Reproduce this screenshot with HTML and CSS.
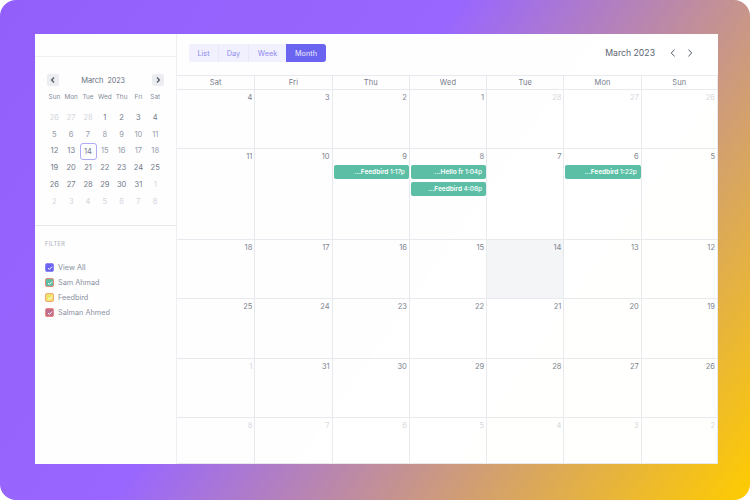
FILE: index.html
```html
<!DOCTYPE html>
<html lang="en">
<head>
<meta charset="utf-8">
<title>Calendar</title>
<link rel="stylesheet" href="styles.css">
</head>
<body>
<div class="stage">
  <main class="panel">
    <aside class="side">
      <div class="side-top"></div>
      <section class="mini">
        <div class="mini-head">
          <button class="mini-nav"><svg width="8" height="8" viewBox="0 0 8 8"><path d="M5 1.5 2.6 4 5 6.5" fill="none" stroke="#4b5563" stroke-width="1.2"/></svg></button>
          <div class="mini-title"><span>March</span><span>2023</span></div>
          <button class="mini-nav"><svg width="8" height="8" viewBox="0 0 8 8"><path d="M3 1.5 5.4 4 3 6.5" fill="none" stroke="#4b5563" stroke-width="1.2"/></svg></button>
        </div>
        <div class="mini-week"><span>Sun</span><span>Mon</span><span>Tue</span><span>Wed</span><span>Thu</span><span>Fri</span><span>Sat</span></div>
        <div class="mini-days">
          <span class="off">26</span><span class="off">27</span><span class="off">28</span><span class="dark">1</span><span class="dark">2</span><span class="dark">3</span><span class="dark">4</span>
          <span>5</span><span>6</span><span>7</span><span>8</span><span>9</span><span>10</span><span>11</span>
          <span class="dark">12</span><span class="dark">13</span><span class="today">14</span><span>15</span><span>16</span><span>17</span><span>18</span>
          <span class="dark">19</span><span class="dark">20</span><span class="dark">21</span><span class="dark">22</span><span class="dark">23</span><span class="dark">24</span><span class="dark">25</span>
          <span class="dark">26</span><span class="dark">27</span><span class="dark">28</span><span class="dark">29</span><span class="dark">30</span><span class="dark">31</span><span class="off">1</span>
          <span class="off">2</span><span class="off">3</span><span class="off">4</span><span class="off">5</span><span class="off">6</span><span class="off">7</span><span class="off">8</span>
        </div>
      </section>
      <section class="filter">
        <h2>FILTER</h2>
        <ul>
          <li><i class="check c-all"><svg width="6" height="6" viewBox="0 0 6 6"><path d="M1 3.2 2.4 4.4 5 1.6" fill="none" stroke="#fff" stroke-width="1"/></svg></i>View All</li>
          <li><i class="check c-sam"><svg width="6" height="6" viewBox="0 0 6 6"><path d="M1 3.2 2.4 4.4 5 1.6" fill="none" stroke="#fff" stroke-width="1"/></svg></i>Sam Ahmad</li>
          <li><i class="check c-feed"><svg width="6" height="6" viewBox="0 0 6 6"><path d="M1 3.2 2.4 4.4 5 1.6" fill="none" stroke="#fff" stroke-width="1"/></svg></i>Feedbird</li>
          <li><i class="check c-sal"><svg width="6" height="6" viewBox="0 0 6 6"><path d="M1 3.2 2.4 4.4 5 1.6" fill="none" stroke="#fff" stroke-width="1"/></svg></i>Salman Ahmed</li>
        </ul>
      </section>
    </aside>
    <section class="cal">
      <header class="toolbar">
        <nav class="views">
          <span class="view">List</span><span class="view">Day</span><span class="view">Week</span><span class="view active">Month</span>
        </nav>
        <div class="period">
          <span class="period-title">March 2023</span>
          <svg width="10" height="10" viewBox="0 0 10 10"><path d="M6.6 1.7 3.2 5l3.4 3.3" fill="none" stroke="#4b5563" stroke-width="1"/></svg>
          <svg width="10" height="10" viewBox="0 0 10 10"><path d="M3.4 1.7 6.8 5 3.4 8.3" fill="none" stroke="#4b5563" stroke-width="1"/></svg>
        </div>
      </header>
      <div class="grid">
        <div class="dow">Sat</div><div class="dow">Fri</div><div class="dow">Thu</div><div class="dow">Wed</div><div class="dow">Tue</div><div class="dow">Mon</div><div class="dow">Sun</div>

        <div class="cell"><b>4</b></div><div class="cell"><b>3</b></div><div class="cell"><b>2</b></div><div class="cell"><b>1</b></div><div class="cell off"><b>28</b></div><div class="cell off"><b>27</b></div><div class="cell off"><b>26</b></div>

        <div class="cell"><b>11</b></div><div class="cell"><b>10</b></div>
        <div class="cell"><b>9</b><div class="event">...Feedbird <span>1:17p</span></div></div>
        <div class="cell"><b>8</b><div class="event">...Hello fr <span>1:04p</span></div><div class="event">...Feedbird <span>4:08p</span></div></div>
        <div class="cell"><b>7</b></div>
        <div class="cell"><b>6</b><div class="event">...Feedbird <span>1:22p</span></div></div>
        <div class="cell"><b>5</b></div>

        <div class="cell"><b>18</b></div><div class="cell"><b>17</b></div><div class="cell"><b>16</b></div><div class="cell"><b>15</b></div><div class="cell now"><b>14</b></div><div class="cell"><b>13</b></div><div class="cell"><b>12</b></div>

        <div class="cell"><b>25</b></div><div class="cell"><b>24</b></div><div class="cell"><b>23</b></div><div class="cell"><b>22</b></div><div class="cell"><b>21</b></div><div class="cell"><b>20</b></div><div class="cell"><b>19</b></div>

        <div class="cell off"><b>1</b></div><div class="cell"><b>31</b></div><div class="cell"><b>30</b></div><div class="cell"><b>29</b></div><div class="cell"><b>28</b></div><div class="cell"><b>27</b></div><div class="cell"><b>26</b></div>

        <div class="cell off"><b>8</b></div><div class="cell off"><b>7</b></div><div class="cell off"><b>6</b></div><div class="cell off"><b>5</b></div><div class="cell off"><b>4</b></div><div class="cell off"><b>3</b></div><div class="cell off"><b>2</b></div>
      </div>
    </section>
  </main>
</div>
</body>
</html>
```
FILE: styles.css
```css
* { box-sizing: border-box; }
html, body { margin: 0; height: 100%; background: #fff; }
body { font-family: Inter, "Liberation Sans", sans-serif; overflow: hidden; }

.stage {
  width: 750px;
  height: 500px;
  padding: 34px 32px 36px 35px;
  border-radius: 16px;
  background: linear-gradient(125deg, #925ffb 0%, #9966ff 42%, #ffcc00 100%);
}
.panel { display: flex; height: 430px; background: #fff; will-change: opacity; opacity: .999; }

.side { width: 142px; flex: none; display: flex; flex-direction: column; border-right: 1px solid #eef0f3; }
.side-top { height: 23px; border-bottom: 1px solid #f1f2f4; }

.mini { height: 169px; padding: 17px 11px 0; border-bottom: 1px solid #e8eaee; }
.mini-head { display: flex; align-items: center; justify-content: space-between; height: 12px; padding: 0 1px; }
.mini-nav { width: 12px; height: 12px; padding: 0; border: 0; border-radius: 2px; background: #eceef1; display: flex; align-items: center; justify-content: center; }
.mini-title { display: flex; gap: 4px; margin-right: 5px; font-size: 7.5px; color: #6b7280; }
.mini-title span + span { font-size: 7.2px; letter-spacing: -.1px; }
.mini-week, .mini-days { display: grid; grid-template-columns: repeat(7, 16.8px); justify-items: center; align-items: center; }
.mini-week { margin-top: 5px; height: 12px; font-size: 6.4px; color: #868d99; }
.mini-days { margin-top: 6px; grid-auto-rows: 16.8px; font-size: 7.5px; color: #969ca8; }
.mini-days .dark { color: #747b88; }
.mini-days .off { color: #d3d6db; }
.mini-days .today { width: 17px; height: 17px; display: flex; align-items: center; justify-content: center; border: 1px solid #b0acf6; border-radius: 3px; color: #747b88; }

.filter { padding: 14px 10px 0; }
.filter h2 { margin: 0; font-size: 5.5px; font-weight: 500; line-height: 8px; letter-spacing: .4px; color: #b3b8c2; }
.filter ul { list-style: none; margin: 15px 0 0; padding: 0; display: flex; flex-direction: column; gap: 6px; }
.filter li { display: flex; align-items: center; gap: 4px; height: 9px; font-size: 7.3px; color: #8a919e; }
.check { width: 9px; height: 9px; flex: none; border-radius: 2px; border: 1px solid; display: flex; align-items: center; justify-content: center; }
.c-all { background: #6a65f0; border-color: #8d89f5; }
.c-sam { background: #5bbfa5; border-color: #ea8a72; }
.c-feed { background: #efe46a; border-color: #f2a877; }
.c-sal { background: #bd6f8e; border-color: #ee8a80; }

.cal { flex: 1; min-width: 0; display: flex; flex-direction: column; }
.toolbar { height: 41px; padding: 10px 23px 0 12px; display: flex; justify-content: space-between; align-items: flex-start; }
.views { display: flex; height: 18px; border-radius: 3px; overflow: hidden; background: #f2f1fe; }
.view { display: flex; align-items: center; justify-content: center; width: 30px; font-size: 7.3px; color: #8f8bf0; border-right: 1px solid #e9e8fb; }
.view:nth-child(3) { width: 37px; border-right: 0; }
.view.active { width: 40px; background: #6a65f0; color: #eeedff; border: 0; }
.period { display: flex; align-items: center; height: 18px; color: #5b6472; font-size: 8.7px; }
.period-title { margin-right: 13px; }
.period svg + svg { margin-left: 7px; }

.grid {
  flex: 1;
  display: grid;
  grid-template-columns: repeat(7, 1fr);
  grid-template-rows: 14px 59px 91px 59px 60px 59px 1fr;
  border-top: 1px solid #e8eaee;
}
.dow { display: flex; align-items: center; justify-content: center; font-size: 7.5px; letter-spacing: .1px; color: #757c89; border-left: 1px solid #e8eaee; border-bottom: 1px solid #e8eaee; }
.cell { padding: 2px 0 0; border-left: 1px solid #e8eaee; border-bottom: 1px solid #e8eaee; display: flex; flex-direction: column; gap: 2px; }
.grid > :nth-child(7n+1) { border-left: 0; }
.grid > :nth-child(7n) { border-right: 1px solid #e8eaee; }
.grid > :nth-child(n+50) { border-bottom: 0; }
.cell b { display: block; height: 12px; line-height: 12px; padding-right: 2px; text-align: right; font-weight: 400; font-size: 7.5px; color: #7d8490; }
.cell.off b { color: #d6d8dd; }
.cell.now { background: #f4f5f7; }
.event { margin: 0 0 0 1px; height: 14px; line-height: 14px; padding-right: 4px; border-radius: 2px; background: #5bbfa5; color: #fff; text-align: right; font-size: 6.5px; font-weight: 600; white-space: nowrap; }
.event span { font-weight: 500; }
.event + .event { margin-top: 1px; }
```
